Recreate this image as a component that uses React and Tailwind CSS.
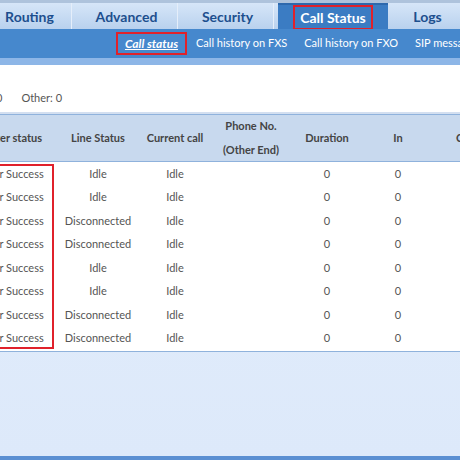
import React from "react";

const tabs = [
  { label: "Routing", w: "w-[84px]" },
  { label: "Advanced", w: "w-[102px]" },
  { label: "Security", w: "w-[92px]" },
  { label: "Call Status", w: "w-[110px]", active: true },
  { label: "Logs", w: "w-[72px]" },
];

const subItems = ["Call history on FXS", "Call history on FXO", "SIP messages"];

const lines = [
  "Idle",
  "Idle",
  "Disconnected",
  "Disconnected",
  "Idle",
  "Idle",
  "Disconnected",
  "Disconnected",
];

const cols = "grid grid-cols-[118px_88px_66px_80px_78px_64px_90px]";

export default function App() {
  return (
    <div className="w-[460px] h-[460px] overflow-hidden flex flex-col bg-gradient-to-b from-[#e4effc] to-[#dde9fa] font-['Lato',sans-serif]">
      {/* top tabs */}
      <div className="h-[3px] bg-[#aec3dc] shrink-0" />
      <div className="h-[26px] shrink-0 flex bg-gradient-to-b from-[#d6e6f8] to-[#b9d1ee]">
        <div className="flex ml-[-12px] gap-[4px]">
          {tabs.map((t) => (
            <div
              key={t.label}
              className={`${t.w} shrink-0 flex items-center justify-center text-[14px] font-bold whitespace-nowrap ${
                t.active
                  ? "bg-[#3b7cc3] border-t-2 border-[#2e69ad] text-white"
                  : "text-[#1d4f8e] border-r border-[#e5eefa]"
              }`}
            >
              {t.active ? (
                <span className="border-2 border-[#e0212b] h-[25px] flex items-center w-[80px] justify-center">
                  {t.label}
                </span>
              ) : (
                t.label
              )}
            </div>
          ))}
        </div>
      </div>

      {/* sub navigation */}
      <div className="h-[29px] shrink-0 bg-[#4688cd] flex items-center pl-[116px] text-[11px] text-white whitespace-nowrap">
        <span className="shrink-0 border-2 border-[#e0212b] h-[23px] w-[71px] flex items-center justify-center font-bold italic underline text-[12px]">
          Call status
        </span>
        <div className="flex shrink-0 gap-[17px] ml-[9px]">
          {subItems.map((s) => (
            <span key={s}>{s}</span>
          ))}
        </div>
      </div>
      <div className="h-[7px] shrink-0 bg-[#8db6e7]" />

      {/* summary */}
      <div className="h-[47px] shrink-0 bg-white flex items-end pb-[7px] text-[11px] text-[#555] leading-[14px] whitespace-nowrap">
        <span className="ml-[-4px]">0</span>
        <span className="ml-[19px]">Other: 0</span>
      </div>
      <div className="h-[2px] shrink-0 bg-[#d3dff0]" />

      {/* table */}
      <div className="shrink-0 ml-[-64px] text-[11px] whitespace-nowrap">
        <div
          className={`${cols} h-[48px] bg-[#c8d9ee] border-y border-[#8fb2dc] font-bold text-[#444] items-center text-center`}
        >
          <div className="pl-[22px]">Register status</div>
          <div>Line Status</div>
          <div>Current call</div>
          <div className="flex flex-col gap-[10px] leading-[14px] pl-[6px]">
            <span>Phone No.</span>
            <span>(Other End)</span>
          </div>
          <div>Duration</div>
          <div>In</div>
          <div className="text-left pl-[26px]">Call Type</div>
        </div>
        <div className="bg-white border-b border-[#8fb2dc] text-[#555] pb-[1px] relative">
          <div className="absolute left-0 top-[2px] w-[118px] h-[185px] border-2 border-[#e0212b]" />
          {lines.map((l, i) => (
            <div key={i} className={`${cols} h-[23.5px] items-center text-center`}>
              <div className="pl-[18px]">Register Success</div>
              <div>{l}</div>
              <div>Idle</div>
              <div />
              <div>0</div>
              <div>0</div>
              <div />
            </div>
          ))}
        </div>
      </div>

      <div className="flex-1" />
      <div className="h-[4px] shrink-0 bg-[#5b8fd2]" />
    </div>
  );
}
